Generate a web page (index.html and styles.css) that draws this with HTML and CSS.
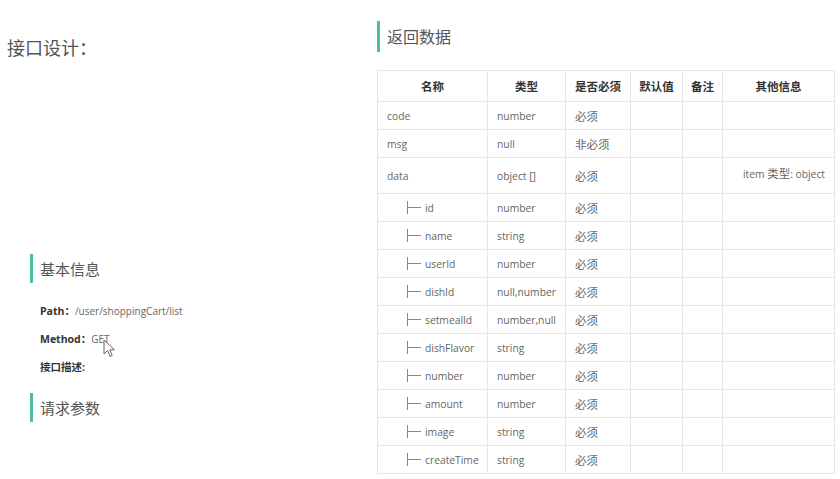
FILE: index.html
```html
<!DOCTYPE html>
<html lang="zh-CN">
<head>
<meta charset="utf-8">
<title>接口设计</title>
<link rel="stylesheet" href="styles.css">
</head>
<body>
<div class="page">
  <div class="left">
    <div class="title">接口设计：</div>
    <div class="section">
      <div class="heading">基本信息</div>
      <div class="info"><b>Path：</b><span>/user/shoppingCart/list</span></div>
      <div class="info method"><b>Method：</b><span>GET</span>
        <svg class="cursor" width="13" height="19" viewBox="0 0 13 19"><path d="M1 1 L1 15 L4.5 11.5 L7 17.5 L9.2 16.6 L6.8 10.8 L11.5 10.8 Z" fill="#fff" stroke="#666" stroke-width="1" stroke-linejoin="round"/></svg>
      </div>
      <div class="info"><b>接口描述:</b></div>
      <div class="heading second">请求参数</div>
    </div>
  </div>
  <div class="right">
    <div class="heading big">返回数据</div>
    <table class="tbl">
      <colgroup>
        <col class="c1"><col class="c2"><col class="c3"><col class="c4"><col class="c5"><col class="c6">
      </colgroup>
      <thead>
        <tr><th>名称</th><th>类型</th><th>是否必须</th><th>默认值</th><th>备注</th><th>其他信息</th></tr>
      </thead>
      <tbody>
        <tr><td>code</td><td>number</td><td class="zh">必须</td><td></td><td></td><td></td></tr>
        <tr><td>msg</td><td>null</td><td class="zh">非必须</td><td></td><td></td><td></td></tr>
        <tr class="tall"><td>data</td><td>object []</td><td class="zh">必须</td><td></td><td></td><td class="other">item <span class="zhs">类型</span>: object</td></tr>
        <tr><td><span class="br"></span>id</td><td>number</td><td class="zh">必须</td><td></td><td></td><td></td></tr>
        <tr><td><span class="br"></span>name</td><td>string</td><td class="zh">必须</td><td></td><td></td><td></td></tr>
        <tr><td><span class="br"></span>userId</td><td>number</td><td class="zh">必须</td><td></td><td></td><td></td></tr>
        <tr><td><span class="br"></span>dishId</td><td>null,number</td><td class="zh">必须</td><td></td><td></td><td></td></tr>
        <tr><td><span class="br"></span>setmealId</td><td>number,null</td><td class="zh">必须</td><td></td><td></td><td></td></tr>
        <tr><td><span class="br"></span>dishFlavor</td><td>string</td><td class="zh">必须</td><td></td><td></td><td></td></tr>
        <tr><td><span class="br"></span>number</td><td>number</td><td class="zh">必须</td><td></td><td></td><td></td></tr>
        <tr><td><span class="br"></span>amount</td><td>number</td><td class="zh">必须</td><td></td><td></td><td></td></tr>
        <tr><td><span class="br"></span>image</td><td>string</td><td class="zh">必须</td><td></td><td></td><td></td></tr>
        <tr><td><span class="br"></span>createTime</td><td>string</td><td class="zh">必须</td><td></td><td></td><td></td></tr>
      </tbody>
    </table>
  </div>
</div>
</body>
</html>
```
FILE: styles.css
```css
html, body {
  margin: 0;
  padding: 0;
  background: #fff;
}
body {
  font-family: "Open Sans", "Noto Sans CJK SC", sans-serif;
  color: #666;
}
.page {
  display: flex;
  width: 840px;
  height: 479px;
  overflow: hidden;
}
.left {
  width: 377px;
  flex: none;
}
.title {
  margin: 36px 0 0 7px;
  font-size: 18px;
  line-height: 24px;
  color: #555;
}
.section {
  margin-top: 194px;
}
.heading {
  margin-left: 30px;
  border-left: 3px solid #4cbf9f;
  padding-left: 7px;
  height: 29px;
  line-height: 30px;
  font-size: 15px;
  color: #555;
}
.heading.second {
  margin-top: 12px;
}
.info {
  padding-left: 40px;
  height: 28px;
  line-height: 28px;
  font-size: 10px;
  color: #666;
}
.heading + .info {
  margin-top: 14px;
}
.info b {
  color: #333;
  font-weight: 700;
  font-size: 10.5px;
}
.method {
  position: relative;
}
.cursor {
  position: absolute;
  left: 103px;
  top: 14px;
}
.right {
  flex: 1;
}
.heading.big {
  margin: 21px 0 0 0;
  height: 31px;
  line-height: 33px;
  font-size: 16px;
}
.tbl {
  margin-top: 18px;
  border-collapse: collapse;
  table-layout: fixed;
  width: 457px;
  font-size: 10.3px;
}
.c1 { width: 110px; }
.c2 { width: 78px; }
.c3 { width: 65px; }
.c4 { width: 52px; }
.c5 { width: 40px; }
.c6 { width: 112px; }
.tbl th, .tbl td {
  border: 1px solid #e6e6e6;
  padding: 0 0 0 9px;
  height: 27px;
  text-align: left;
  white-space: nowrap;
  color: #666;
  font-weight: 400;
}
.tbl th {
  height: 30px;
  padding: 0;
  text-align: center;
  font-weight: 700;
  font-size: 11.5px;
  color: #333;
}
.tbl td.zh {
  font-size: 11.5px;
}
.tbl tr.tall td {
  height: 35px;
}
.tbl tr.tall td.other {
  text-align: right;
  height: 29px;
  padding: 0 9px 6px 0;
}
.zhs {
  font-size: 11.5px;
}
.br {
  display: inline-block;
  width: 13px;
  height: 13px;
  margin: 0 4px 0 20px;
  vertical-align: -2px;
  border-left: 1px solid #888;
  background: linear-gradient(#888, #888) no-repeat 0 6px / 100% 1px;
}
```
